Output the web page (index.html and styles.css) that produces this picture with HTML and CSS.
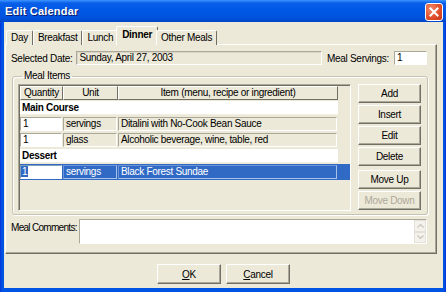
FILE: index.html
```html
<!DOCTYPE html>
<html lang="en">
<head>
  <meta charset="utf-8">
  <title>Edit Calendar</title>
  <link rel="stylesheet" href="styles.css">
</head>
<body>
  <div class="window">
    <div class="titlebar">
      <span class="title">Edit Calendar</span>
      <span class="close-button">
        <svg width="18" height="18" viewBox="0 0 18 18">
          <path d="M5 5 L13 13 M13 5 L5 13" stroke="#fff" stroke-width="2.2" stroke-linecap="square"/>
        </svg>
      </span>
    </div>
    <div class="client">
      <div class="tabs">
        <span class="tab">Day</span>
        <span class="tab">Breakfast</span>
        <span class="tab">Lunch</span>
        <span class="tab active">Dinner</span>
        <span class="tab">Other Meals</span>
      </div>
      <div class="panel">
        <div class="date-row">
          <span class="label">Selected Date:</span>
          <span class="field readonly date-field">Sunday, April 27, 2003</span>
          <span class="label servings-label">Meal Servings:</span>
          <span class="field servings-field">1</span>
        </div>
        <fieldset class="group">
          <legend>Meal Items</legend>
          <div class="group-body">
            <div class="grid">
              <div class="grid-head">
                <span class="head qty">Quantity</span>
                <span class="head unit">Unit</span>
                <span class="head item">Item (menu, recipe or ingredient)</span>
              </div>
              <div class="grid-row">
                <span class="section">Main Course</span>
              </div>
              <div class="grid-row">
                <span class="cell qty">1</span>
                <span class="cell unit">servings</span>
                <span class="cell item">Ditalini with No-Cook Bean Sauce</span>
              </div>
              <div class="grid-row">
                <span class="cell qty">1</span>
                <span class="cell unit">glass</span>
                <span class="cell item">Alcoholic beverage, wine, table, red</span>
              </div>
              <div class="grid-row">
                <span class="section">Dessert</span>
              </div>
              <div class="grid-row selected">
                <span class="cell qty"><span class="sel-text">1</span></span>
                <span class="cell unit">servings</span>
                <span class="cell item">Black Forest Sundae</span>
              </div>
            </div>
            <div class="side-buttons">
              <button class="btn">Add</button>
              <button class="btn">Insert</button>
              <button class="btn">Edit</button>
              <button class="btn">Delete</button>
              <button class="btn move-up">Move Up</button>
              <button class="btn" disabled>Move Down</button>
            </div>
          </div>
        </fieldset>
        <div class="comments-row">
          <span class="label comments-label">Meal Comments:</span>
          <div class="memo">
            <div class="scrollbar">
              <span class="scroll-btn">
                <svg width="7" height="4" viewBox="0 0 7 4"><path d="M0.5 3.5 L3.5 0.5 L6.5 3.5" fill="none" stroke="#c8c6bc" stroke-width="1.2"/></svg>
              </span>
              <span class="scroll-btn">
                <svg width="7" height="4" viewBox="0 0 7 4"><path d="M0.5 0.5 L3.5 3.5 L6.5 0.5" fill="none" stroke="#c8c6bc" stroke-width="1.2"/></svg>
              </span>
            </div>
          </div>
        </div>
      </div>
      <div class="footer">
        <button class="btn dialog-btn"><u>O</u>K</button>
        <button class="btn dialog-btn"><u>C</u>ancel</button>
      </div>
    </div>
  </div>
</body>
</html>
```

FILE: styles.css
```css
* {
  box-sizing: border-box;
}
body {
  margin: 0;
  font-family: 'Liberation Sans', Arial, sans-serif;
  font-size: 10px;
  letter-spacing: -0.3px;
  color: #000;
  background: #fff;
}
.window {
  width: 446px;
  height: 292px;
  display: flex;
  flex-direction: column;
  background: linear-gradient(to right, #0831d9, #0054e3 2px, #0054e3 calc(100% - 2px), #0831d9);
}
.titlebar {
  height: 22px;
  display: flex;
  align-items: center;
  justify-content: space-between;
  padding: 0 3px 0 5px;
  background: linear-gradient(#3d95ff, #0a5fe8 3px, #0058e6 45%, #0052dc 80%, #0046c8);
}
.title {
  color: #fff;
  font-weight: bold;
  font-size: 11px;
  letter-spacing: 0.2px;
  text-shadow: 1px 1px #0a1e6e;
}
.close-button {
  width: 18px;
  height: 18px;
  margin-top: 2px;
  border: 1px solid #fff;
  border-radius: 3px;
  background: radial-gradient(circle at 30% 30%, #f08a6a, #e0502b 55%, #c7381a);
  display: flex;
  align-items: center;
  justify-content: center;
}
.close-button svg {
  width: 16px;
  height: 16px;
}
.client {
  flex: 1;
  margin: 0 3px 4px 4px;
  background: #ece9d8;
  display: flex;
  flex-direction: column;
}

/* tabs */
.tabs {
  display: flex;
  align-items: flex-end;
  height: 22px;
  padding: 4px 0 0 2px;
  position: relative;
  z-index: 1;
}
.tab {
  height: 15px;
  margin-bottom: -1px;
  padding: 0 4px;
  line-height: 14px;
  background: #ece9d8;
  border-top: 1px solid #fff;
  border-left: 1px solid #fff;
  border-right: 1px solid #716f64;
  border-radius: 2px 2px 0 0;
}
.tab.active {
  height: 19px;
  margin-left: -2px;
  margin-right: -2px;
  padding: 0 5px;
  line-height: 16px;
  font-weight: bold;
  border-bottom: none;
}
.panel {
  margin-left: 1px;
  width: 432px;
  height: 210px;
  padding: 6px 9px 0 5px;
  border-top: 1px solid #fff;
  border-left: 1px solid #fff;
  border-right: 1px solid #716f64;
  border-bottom: 1px solid #716f64;
  box-shadow: inset -1px -1px #aca899;
}
.date-row {
  display: flex;
  align-items: center;
  height: 14px;
}
.label {
  white-space: nowrap;
  color: #000;
}
.field {
  height: 14px;
  line-height: 12px;
  padding-left: 2px;
  border-top: 1px solid #aca899;
  border-left: 1px solid #aca899;
  border-right: 1px solid #fff;
  border-bottom: 1px solid #fff;
  background: #fff;
  white-space: nowrap;
}
.field.readonly {
  background: #ece9d8;
  box-shadow: inset 1px 1px #d8d5c6;
}
.date-field {
  flex: 1;
  margin-left: 4px;
}
.servings-label {
  margin: 0 5px;
}
.servings-field {
  width: 33px;
}

/* meal items group */
.group {
  margin: 5px 0 0 1px;
  padding: 2px 6px 3px 5px;
  width: 416px;
  min-width: 0;
  border: 1px solid #c6c3b3;
  border-radius: 3px;
  box-shadow: 1px 1px #fff, inset 1px 1px #fff;
}
.group legend {
  padding: 0 2px;
  margin-left: 4px;
  line-height: 12px;
}
.group-body {
  display: flex;
  gap: 7px;
}
.grid {
  width: 333px;
  height: 127px;
  border-top: 1px solid #aca899;
  border-left: 1px solid #aca899;
  border-right: 1px solid #fff;
  border-bottom: 1px solid #fff;
  box-shadow: inset 1px 1px #716f64;
  padding: 1px 0 0 1px;
}
.grid-head {
  display: flex;
  height: 14px;
}
.head {
  text-align: center;
  line-height: 12px;
  border-top: 1px solid #fff;
  border-left: 1px solid #fff;
  border-right: 1px solid #716f64;
  border-bottom: 1px solid #716f64;
  white-space: nowrap;
  overflow: hidden;
}
.head.qty {
  width: 43px;
}
.head.unit {
  width: 55px;
}
.head.item {
  width: 220px;
}
.grid-row {
  display: flex;
  height: 16px;
  padding-top: 1px;
}
.section {
  width: 318px;
  height: 14px;
  padding-left: 2px;
  line-height: 13px;
  font-weight: bold;
  background: #fff;
  border-bottom: 1px solid #f1efe2;
}
.cell {
  height: 14px;
  margin-right: 1px;
  padding-left: 2px;
  line-height: 12px;
  white-space: nowrap;
  overflow: hidden;
  border-top: 1px solid #aca899;
  border-left: 1px solid #aca899;
  border-right: 1px solid #fff;
  border-bottom: 1px solid #fff;
}
.cell.qty {
  width: 42px;
  background: #fff;
}
.cell.unit {
  width: 54px;
}
.cell.item {
  width: 219px;
}
.grid-row.selected {
  background: #316ac5;
  color: #fff;
}
.grid-row.selected .cell {
  border-top-color: #6b93d6;
  border-left-color: #6b93d6;
  border-right-color: #a9c0e8;
  border-bottom-color: #a9c0e8;
}
.grid-row.selected .cell.qty {
  color: #fff;
  border-color: #7f9db9 #fff #fff #7f9db9;
}
.sel-text {
  background: #316ac5;
  padding: 0 1px;
  margin-left: -2px;
}
.side-buttons {
  display: flex;
  flex-direction: column;
  gap: 2px;
  width: 63px;
}
.btn {
  font: inherit;
  letter-spacing: inherit;
  color: #000;
  height: 19px;
  padding: 0;
  background: #ece9d8;
  border-top: 1px solid #fff;
  border-left: 1px solid #fff;
  border-right: 1px solid #716f64;
  border-bottom: 1px solid #716f64;
  box-shadow: inset -1px -1px #aca899;
}
.btn.move-up {
  margin-top: 2px;
}
.btn:disabled {
  color: #aca899;
}

/* comments */
.comments-row {
  display: flex;
  margin-top: 4px;
}
.comments-label {
  padding-top: 3px;
  padding-right: 2px;
  letter-spacing: -0.7px;
}
.memo {
  flex: 1;
  height: 25px;
  background: #fff;
  border-top: 1px solid #aca899;
  border-left: 1px solid #aca899;
  border-right: 1px solid #fff;
  border-bottom: 1px solid #fff;
  display: flex;
  justify-content: flex-end;
}
.scrollbar {
  width: 12px;
  display: flex;
  flex-direction: column;
}
.scroll-btn {
  flex: 1;
  display: flex;
  align-items: center;
  justify-content: center;
  background: #f3f2ec;
  border: 1px solid #e3e1d8;
}

/* dialog buttons */
.footer {
  display: flex;
  justify-content: center;
  gap: 5px;
  margin-top: 10px;
}
.dialog-btn {
  width: 64px;
  height: 20px;
}
```
